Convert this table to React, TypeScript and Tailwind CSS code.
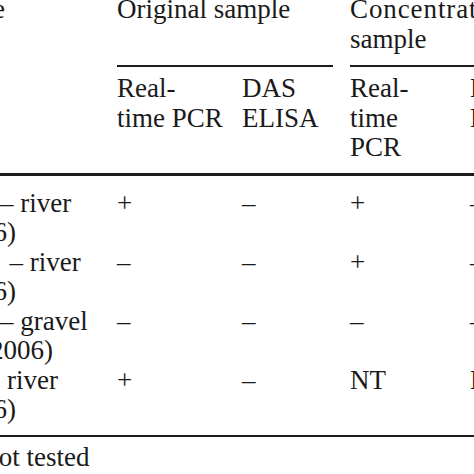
import React from 'react'

const rule = 'border-[#1c1c1c]'

const rows: { label: React.ReactNode; cells: string[] }[] = [
    {
        label: (
            <>
                <div>– river</div>
                <div className="-ml-[6.5px]">6)</div>
            </>
        ),
        cells: ['+', '–', '+', '–'],
    },
    {
        label: (
            <>
                <div className="ml-[9.5px]">– river</div>
                <div className="-ml-[6.5px]">6)</div>
            </>
        ),
        cells: ['–', '–', '+', '–'],
    },
    {
        label: (
            <>
                <div>– gravel</div>
                <div className="-ml-[10px]">2006)</div>
            </>
        ),
        cells: ['–', '–', '–', '–'],
    },
    {
        label: (
            <>
                <div className="ml-[7px]">river</div>
                <div className="-ml-[6.5px]">6)</div>
            </>
        ),
        cells: ['+', '–', 'NT', 'NT'],
    },
]

export default function App() {
    return (
        <div className="w-[474px] h-[474px] overflow-hidden bg-white text-[#1a1a1a] font-['Liberation_Serif',serif] text-[27px] leading-[29.5px]">
            <div className="-mt-[5px] w-[720px]">
                {/* Group headings */}
                <div className="grid grid-cols-[117px_233px_370px]">
                    <div className="whitespace-nowrap">
                        <span className="-ml-[7px]">e</span>
                    </div>
                    <div className="pr-[17px]">
                        <div className={`h-full pb-[11px] border-b-2 ${rule}`}>Original sample</div>
                    </div>
                    <div>
                        <div className={`h-full pb-[11px] border-b-2 ${rule}`}>
                            <span className="tracking-[0.9px]">Concentrated</span>
                            <br />
                            sample
                        </div>
                    </div>
                </div>

                {/* Method headings */}
                <div className={`grid grid-cols-[117px_125px_108px_120px_250px] pt-[7px] pb-[10px] border-b-[3px] ${rule}`}>
                    <div />
                    <div>
                        Real-
                        <br />
                        time PCR
                    </div>
                    <div>
                        DAS
                        <br />
                        ELISA
                    </div>
                    <div>
                        Real-
                        <br />
                        time
                        <br />
                        PCR
                    </div>
                    <div>
                        DAS
                        <br />
                        ELISA
                    </div>
                </div>

                {/* Results */}
                <div className={`pt-[13px] pb-[10px] border-b-2 ${rule}`}>
                    {rows.map((row, i) => (
                        <div key={i} className="grid grid-cols-[117px_125px_108px_120px_250px]">
                            <div className="whitespace-nowrap">{row.label}</div>
                            {row.cells.map((c, j) => (
                                <div key={j}>{c}</div>
                            ))}
                        </div>
                    ))}
                </div>

                <div className="mt-[6px] whitespace-nowrap">
                    <span className="-ml-[57px] inline-block">NT not tested</span>
                </div>
            </div>
        </div>
    )
}
